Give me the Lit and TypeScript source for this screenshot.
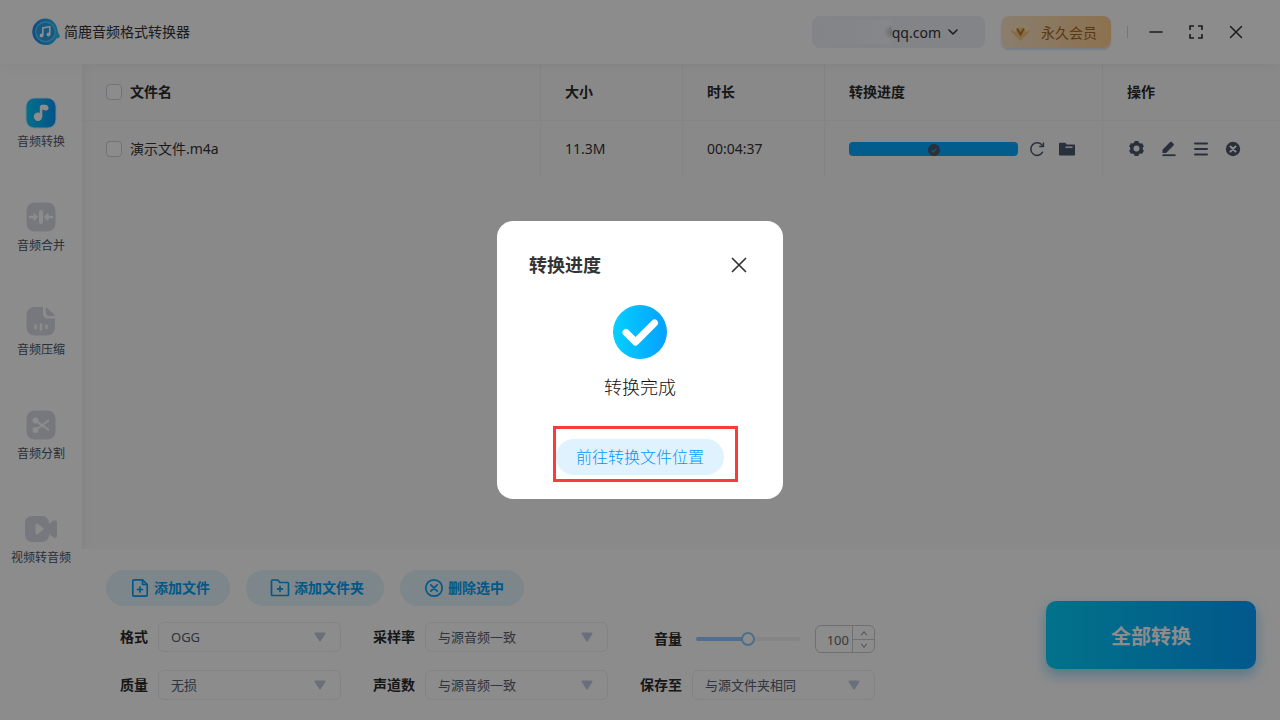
import { LitElement, html, svg, css } from "lit";
import { customElement, property, state } from "lit/decorators.js";
import { classMap } from "lit/directives/class-map.js";

const reset = css`
  * {
    box-sizing: border-box;
  }
  button {
    margin: 0;
    padding: 0;
    border: 0;
    background: none;
    font: inherit;
    color: inherit;
    cursor: pointer;
  }
  svg {
    display: block;
    flex: none;
  }
`;

const stroke = (d: string, width = 2) =>
  svg`<path d=${d} fill="none" stroke="currentColor" stroke-width=${width} stroke-linecap="round" stroke-linejoin="round"/>`;

const icon18 = (body: unknown) =>
  html`<svg width="18" height="18" viewBox="0 0 18 18" aria-hidden="true">${body}</svg>`;

const icons = {
  refresh: icon18(svg`
    <path d="M14.6 12.2A6.3 6.3 0 1 1 14.4 5.6" fill="none" stroke="currentColor" stroke-width="1.5" stroke-linecap="round"/>
    <path d="M15.4 2.6V6.6H11.2" fill="none" stroke="currentColor" stroke-width="1.5"/>`),
  folder: icon18(svg`
    <path d="M2 2.8h5.2l1.6 1.6h7.4c.5 0 .8.3.8.8v9.600c0 .5-.3.8-.8.8H1.800c-.5 0-.8-.3-.8-.8V3.800c0-.6.4-1 1-1z" fill="currentColor"/>
    <path d="M7.500 7.200h7" stroke="#fafafa" stroke-width="1.400"/>`),
  gear: icon18(svg`
    <circle cx="9.500" cy="8.500" r="4.700" fill="none" stroke="currentColor" stroke-width="3.400"/>
    <path d="M9.500 1v3M9.500 13v3M3 4.800l2.600 1.500M13.400 10.700l2.600 1.500M3 12.200l2.600-1.500M13.400 6.300l2.600-1.500" stroke="currentColor" stroke-width="4"/>`),
  edit: icon18(svg`
    <path d="M3.500 9.700l7.600-7.600c.5-.5 1.200-.5 1.700 0l1.700 1.700c.5.5.5 1.200 0 1.700L7 13H3.500z" fill="currentColor"/>
    <path d="M3.500 15.200h13" stroke="currentColor" stroke-width="1.800"/>`),
  list: icon18(stroke("M4 3.500h12M4 9h12M4 14.500h12", 2)),
  remove: icon18(svg`
    <circle cx="10" cy="9" r="7.200" fill="currentColor"/>
    <path d="M7.500 6.500l5 5M12.500 6.500l-5 5" stroke="#fafafa" stroke-width="2" stroke-linecap="round"/>`),
};

const navIcons = {
  convert: html`<svg width="32" height="32" viewBox="0 0 32 32" aria-hidden="true">
    <defs><linearGradient id="nav" x1="0" y1="0" x2="1" y2="0"><stop stop-color="#05cbfb"/><stop offset="1" stop-color="#0a98fa"/></linearGradient></defs>
    <rect x="0.500" y="0.500" width="31" height="31" rx="9" fill="#bfe9ff" opacity=".7"/>
    <rect x="1.500" y="1.500" width="29" height="29" rx="8" fill="url(#nav)"/>
    <circle cx="13" cy="19.800" r="4.200" fill="#fff"/>
    <path d="M14.800 20V10.200c0-1.500 1-2.400 2.400-2.400h3c2 0 3.400 1.300 3.400 3.200 0 1.800-1.500 2.800-3.300 2.400l-3-.6V20z" fill="#fff"/>
  </svg>`,
  merge: html`<svg width="32" height="32" viewBox="0 0 32 32" aria-hidden="true">
    <rect x="1.500" y="1.500" width="29" height="29" rx="8" fill="#d9dbe4"/>
    <path d="M16 11v10" stroke="#fff" stroke-width="4" stroke-linecap="round"/>
    <path d="M5 16h5M27 16h-5" stroke="#fff" stroke-width="2.600" stroke-linecap="round"/>
    <path d="M9 12.500l3.700 3.500L9 19.500zM23 12.500L19.300 16l3.700 3.500z" fill="#fff" stroke="#fff" stroke-linejoin="round"/>
  </svg>`,
  compress: html`<svg width="32" height="32" viewBox="0 0 32 32" aria-hidden="true">
    <path d="M9.500 2H18v5.500c0 4 2 6 6 6h6V22.500a8 8 0 0 1-8 8H9.500a8 8 0 0 1-8-8V10a8 8 0 0 1 8-8z" fill="#d9dbe4"/>
    <path d="M20.800 2.500c.8 0 1.500.4 2 .9l6 5.600c.7.700 1 1.200 1 2H24.500c-2.500 0-3.700-1.200-3.700-3.600z" fill="#d9dbe4"/>
    <path d="M10.500 20.500v2.500M16 19.500v5M21.500 20.500v2.500" stroke="#fff" stroke-width="2.600" stroke-linecap="round"/>
  </svg>`,
  split: html`<svg width="32" height="32" viewBox="0 0 32 32" aria-hidden="true">
    <rect x="1.500" y="1.500" width="29" height="29" rx="8" fill="#d9dbe4"/>
    <circle cx="10.500" cy="11.500" r="3" fill="#fff"/>
    <circle cx="10.500" cy="21" r="3" fill="#fff"/>
    <path d="M12 12.600L23.500 20.700M12 20L23.500 11.500" stroke="#fff" stroke-width="2" stroke-linecap="round"/>
  </svg>`,
  video: html`<svg width="32" height="32" viewBox="0 0 32 32" aria-hidden="true">
    <path d="M24 11l4-3.200c2-1.400 4-.5 4 1.700v13c0 2.200-2 3.100-4 1.700L24 21z" fill="#d9dbe4"/>
    <rect x="0" y="3" width="24" height="26" rx="6.500" fill="#d9dbe4"/>
    <path d="M10.500 12.200v7.600c0 1.400 1 2 2.200 1.300l5.300-4c.9-.6.900-1.600 0-2.200l-5.300-4c-1.200-.7-2.200-.1-2.200 1.300z" fill="#fff"/>
  </svg>`,
};

const actionIcons = {
  file: html`<svg width="20" height="20" viewBox="0 0 20 20" aria-hidden="true">
    ${stroke("M12.500 1.800H4c-.7 0-1.200.5-1.200 1.200v14c0 .7.500 1.200 1.200 1.200h12c.7 0 1.200-.5 1.200-1.200V6.500z", 1.7)}
    ${stroke("M12.500 1.800v4.700h4.700M10 9v5M7.500 11.500h5", 1.7)}
  </svg>`,
  folder: html`<svg width="20" height="20" viewBox="0 0 20 20" aria-hidden="true">
    ${stroke("M2.600 2h5.200l2 2.500h7.600c.6 0 1.100.5 1.100 1.100v10.800c0 .6-.5 1.100-1.100 1.100H2.600c-.6 0-1.100-.5-1.100-1.100V3.100C1.500 2.500 2 2 2.600 2z", 1.7)}
    ${stroke("M10 8.300v5M7.500 10.800h5", 1.7)}
  </svg>`,
  remove: html`<svg width="20" height="20" viewBox="0 0 20 20" aria-hidden="true">
    <circle cx="10" cy="10" r="8.200" fill="none" stroke="currentColor" stroke-width="1.700"/>
    ${stroke("M6.800 6.800l6.400 6.400M13.200 6.800l-6.400 6.400", 1.7)}
  </svg>`,
};

@customElement("title-bar")
class TitleBar extends LitElement {
  static styles = [
    reset,
    css`
      :host {
        display: flex;
        align-items: center;
        gap: 16px;
        height: 64px;
        padding: 0 32px;
        background: #fff;
        box-shadow: 0 0 12px rgba(60, 70, 90, 0.08);
      }
      .brand {
        display: flex;
        align-items: center;
        gap: 4px;
        margin-right: auto;
        font-size: 14px;
        line-height: 20px;
        color: #333;
      }
      .account {
        display: flex;
        align-items: center;
        gap: 6px;
        height: 32px;
        padding: 0 26px 0 12px;
        border-radius: 8px;
        background: #edf0f8;
        color: #333;
        font-size: 14px;
      }
      .mask {
        width: 68px;
        height: 24px;
        background: radial-gradient(8px 8px at 100% 50%, #b4c6d4, transparent),
          linear-gradient(90deg, #eef1f8, #f5f7fa);
        border-radius: 2px;
      }
      .address {
        display: flex;
        align-items: center;
      }
      .vip {
        display: flex;
        align-items: center;
        gap: 10px;
        height: 32px;
        padding: 0 14px 0 9px;
        border-radius: 8px;
        background: linear-gradient(90deg, #fbe5cb, #ffce8f);
        box-shadow: 0 2px 2px #d6e6f0;
        color: #a5691c;
        font-size: 14px;
      }
      .rule {
        width: 1px;
        height: 12px;
        background: #d5d8e0;
      }
      .window {
        color: #333;
      }
    `,
  ];

  render() {
    return html`
      <div class="brand">
        <svg width="28" height="28" viewBox="0 0 28 28" aria-hidden="true">
          <defs><linearGradient id="logo" x1="0" y1="0" x2="1" y2="0"><stop stop-color="#1a8df0"/><stop offset="1" stop-color="#22c7f0"/></linearGradient></defs>
          <path d="M13.500 0.500c6.600 0 11.500 5.300 12.100 11.600.2 2 .8 3.200 2.200 5.400.3 1.600-1.200 2.700-3.500 2.900C22.200 24.700 18.300 27 13.500 27A13.200 13.200 0 0 1 13.500.5z" fill="url(#logo)"/>
          <circle cx="13.500" cy="13.800" r="9.800" fill="#27a2ee" stroke="#6cc8f5" stroke-width="1.300"/>
          <path d="M10.800 17.500V10l7-1.300v7.600" fill="none" stroke="#fff" stroke-width="1.600"/>
          <circle cx="9.500" cy="17.500" r="1.900" fill="#fff"/><circle cx="16.500" cy="16.500" r="1.900" fill="#fff"/>
        </svg>
        <span>简鹿音频格式转换器</span>
      </div>
      <button class="account">
        <span class="address"><span class="mask"></span>qq.com</span>
        <svg width="12" height="12" viewBox="0 0 12 12" aria-hidden="true">${stroke("M2 4l4 4 4-4", 1.6)}</svg>
      </button>
      <button class="vip">
        <svg width="21" height="20" viewBox="0 0 21 20" aria-hidden="true">
          <path d="M5 2h11l4 5.500-1 3L10.500 19 2 10.500l-1-3z" fill="#f5c680"/>
          <path d="M5 2h11l4 5.500-4 2.500L10.500 5 5 10 1 7.500z" fill="#ffe5b4"/>
          <path d="M7 6.500l3.500 6 3.500-6" fill="none" stroke="#b87a35" stroke-width="2"/>
        </svg>
        <span>永久会员</span>
      </button>
      <span class="rule"></span>
      <button class="window" aria-label="最小化">
        <svg width="24" height="24" viewBox="0 0 24 24">${stroke("M6 12h12", 1.6)}</svg>
      </button>
      <button class="window" aria-label="最大化">
        <svg width="24" height="24" viewBox="0 0 24 24">
          <path d="M6 10V6h4M14 6h4v4M18 14v4h-4M10 18H6v-4" fill="none" stroke="currentColor" stroke-width="1.600"/>
        </svg>
      </button>
      <button class="window" aria-label="关闭">
        <svg width="24" height="24" viewBox="0 0 24 24">${stroke("M6.500 6.500l11 11M17.500 6.500l-11 11", 1.5)}</svg>
      </button>
    `;
  }
}

@customElement("side-nav")
class SideNav extends LitElement {
  @state() private current = "convert";

  static styles = [
    reset,
    css`
      :host {
        display: block;
        width: 82px;
        padding-top: 33px;
        background: #fff;
        box-shadow: 0 0 12px rgba(60, 70, 90, 0.08);
      }
      .list {
        display: flex;
        flex-direction: column;
        gap: 51px;
      }
      .item {
        display: flex;
        flex-direction: column;
        align-items: center;
        gap: 5px;
        width: 100%;
        font-size: 12px;
        line-height: 16px;
        color: #4b5668;
      }
      .active {
        color: #515a6b;
      }
    `,
  ];

  private items: [keyof typeof navIcons, string][] = [
    ["convert", "音频转换"],
    ["merge", "音频合并"],
    ["compress", "音频压缩"],
    ["split", "音频分割"],
    ["video", "视频转音频"],
  ];

  render() {
    return html`<nav class="list">
      ${this.items.map(
        ([key, label]) => html`<button
          class=${classMap({ item: true, active: this.current === key })}
          @click=${() => (this.current = key)}
        >
          ${navIcons[key]}<span>${label}</span>
        </button>`
      )}
    </nav>`;
  }
}

@customElement("file-table")
class FileTable extends LitElement {
  @state() private files = [{ name: "演示文件.m4a", size: "11.3M", time: "00:04:37", progress: 100 }];

  static styles = [
    reset,
    css`
      :host {
        display: block;
      }
      .table {
        width: 100%;
        table-layout: fixed;
        border-collapse: separate;
        border-spacing: 0;
        font-size: 14px;
        line-height: 20px;
        color: #333;
      }
      .table th,
      .table td {
        height: 56px;
        padding: 0 24px;
        text-align: left;
        border-left: 1px solid #eef0f5;
      }
      .table th {
        height: 57px;
        border-bottom: 1px solid #eef0f5;
        font-weight: 700;
        color: #2b2b2b;
      }
      .table th:first-child,
      .table td:first-child {
        border-left: 0;
      }
      .short {
        width: 142px;
      }
      .wide {
        width: 278px;
      }
      .last {
        width: 178px;
      }
      .name {
        display: flex;
        align-items: center;
        gap: 8px;
      }
      .check {
        appearance: none;
        width: 16px;
        height: 16px;
        margin: 0;
        border: 1px solid #d0d2da;
        border-radius: 4px;
        background: #fff;
      }
      .progress,
      .tools {
        display: flex;
        align-items: center;
      }
      .progress {
        gap: 10px;
        padding-right: 2px;
      }
      .tools {
        gap: 12px;
        color: #4c586e;
      }
      .ops {
        gap: 14px;
      }
      .track {
        display: grid;
        flex: 1;
        height: 14px;
        border-radius: 4px;
        background: #e6ebf2;
        overflow: hidden;
      }
      .fill,
      .done {
        grid-area: 1 / 1;
      }
      .fill {
        background: #05a8ff;
      }
      .done {
        place-self: end center;
      }
    `,
  ];

  render() {
    return html`<table class="table">
      <thead>
        <tr>
          <th><label class="name"><input class="check" type="checkbox" />文件名</label></th>
          <th class="short">大小</th>
          <th class="short">时长</th>
          <th class="wide">转换进度</th>
          <th class="last">操作</th>
        </tr>
      </thead>
      <tbody>
        ${this.files.map(
          (f) => html`<tr>
            <td><label class="name"><input class="check" type="checkbox" />${f.name}</label></td>
            <td>${f.size}</td>
            <td>${f.time}</td>
            <td>
              <div class="progress">
                <div class="track">
                  <div class="fill" style="width:${f.progress}%"></div>
                  <svg class="done" width="12" height="12" viewBox="0 0 12 12" aria-hidden="true">
                    <circle cx="6" cy="6" r="6" fill="#4c586e"/>
                    <path d="M3.500 6.200l1.800 1.800 3.200-3.700" fill="none" stroke="#19a4f5" stroke-width="1.200"/>
                  </svg>
                </div>
                <div class="tools">
                  <button aria-label="重新转换">${icons.refresh}</button>
                  <button aria-label="打开文件夹">${icons.folder}</button>
                </div>
              </div>
            </td>
            <td>
              <div class="tools ops">
                <button aria-label="设置">${icons.gear}</button>
                <button aria-label="编辑">${icons.edit}</button>
                <button aria-label="详情">${icons.list}</button>
                <button aria-label="移除">${icons.remove}</button>
              </div>
            </td>
          </tr>`
        )}
      </tbody>
    </table>`;
  }
}

@customElement("option-field")
class OptionField extends LitElement {
  @property() label = "";
  @property() value = "";

  static styles = [
    reset,
    css`
      :host {
        display: grid;
        grid-template-columns: 42px minmax(0, 183px);
        align-items: center;
        gap: 10px;
      }
      .label {
        text-align: right;
        font-size: 14px;
        line-height: 20px;
        font-weight: 700;
        color: #2b2b2b;
        white-space: nowrap;
      }
      .box {
        display: grid;
        align-items: center;
      }
      .select {
        grid-area: 1 / 1;
        appearance: none;
        width: 100%;
        height: 30px;
        padding: 0 32px 0 12px;
        border: 1px solid #eceef3;
        border-radius: 6px;
        background: #fff;
        font: inherit;
        font-size: 13px;
        color: #566072;
      }
      .arrow {
        grid-area: 1 / 1;
        justify-self: end;
        margin-right: 15px;
        pointer-events: none;
      }
    `,
  ];

  render() {
    return html`
      <label class="label" for="select">${this.label}</label>
      <div class="box">
        <select class="select" id="select"><option>${this.value}</option></select>
        <svg class="arrow" width="12" height="10" viewBox="0 0 12 10" aria-hidden="true">
          <path d="M1.500 1.500h9L6 8.500z" fill="#c3c8e0" stroke="#c3c8e0" stroke-width="2" stroke-linejoin="round"/>
        </svg>
      </div>
    `;
  }
}

@customElement("volume-field")
class VolumeField extends LitElement {
  @state() private volume = 100;

  static styles = [
    reset,
    css`
      :host {
        display: flex;
        align-items: center;
        padding-top: 3px;
      }
      .label {
        width: 42px;
        text-align: right;
        font-size: 14px;
        line-height: 20px;
        font-weight: 700;
        color: #2b2b2b;
      }
      .range {
        appearance: none;
        flex: 1;
        min-width: 0;
        height: 14px;
        margin: 0 15px 0 14px;
        background: none;
      }
      .range::-webkit-slider-runnable-track {
        height: 4px;
        border-radius: 2px;
        background: linear-gradient(90deg, #90cbff 50%, #f2f3f5 50%);
      }
      .range::-webkit-slider-thumb {
        appearance: none;
        width: 14px;
        height: 14px;
        margin-top: -5px;
        border: 2px solid #90c8fa;
        border-radius: 50%;
        background: #fff;
      }
      .spin {
        display: grid;
        grid-template-columns: 1fr 22px;
        grid-template-rows: 1fr 1fr;
        width: 60px;
        height: 28px;
        border: 1px solid #ccc;
        border-radius: 6px;
        overflow: hidden;
      }
      .number {
        appearance: none;
        grid-row: 1 / 3;
        min-width: 0;
        width: 100%;
        padding: 2px 3px 0 0;
        border: 0;
        background: none;
        font: inherit;
        font-size: 13px;
        color: #666;
        text-align: right;
      }
      .step {
        display: grid;
        place-items: center;
        border-left: 1px solid #ccc;
        color: #888;
      }
      .down {
        border-top: 1px solid #ccc;
      }
    `,
  ];

  private nudge(by: number) {
    this.volume = Math.min(200, Math.max(0, this.volume + by));
  }

  render() {
    return html`
      <label class="label" for="range">音量</label>
      <input
        class="range"
        id="range"
        type="range"
        min="0"
        max="200"
        .value=${String(this.volume)}
        @input=${(e: Event) => (this.volume = Number((e.target as HTMLInputElement).value))}
      />
      <div class="spin">
        <input class="number" aria-label="音量" inputmode="numeric" .value=${String(this.volume)} />
        <button class="step" aria-label="增大" @click=${() => this.nudge(1)}>
          <svg width="8" height="6" viewBox="0 0 8 6">${stroke("M1.500 5L4 1.500 6.500 5", 1)}</svg>
        </button>
        <button class="step down" aria-label="减小" @click=${() => this.nudge(-1)}>
          <svg width="8" height="6" viewBox="0 0 8 6">${stroke("M1.500 1L4 4.500 6.500 1", 1)}</svg>
        </button>
      </div>
    `;
  }
}

@customElement("control-panel")
class ControlPanel extends LitElement {
  static styles = [
    reset,
    css`
      :host {
        display: flex;
        align-items: center;
        justify-content: space-between;
        gap: 24px;
        padding: 21px 24px 20px;
        background: #fff;
      }
      .actions {
        display: flex;
        gap: 16px;
        margin-bottom: 16px;
      }
      .action {
        display: flex;
        align-items: center;
        gap: 4px;
        height: 36px;
        padding: 0 20px 0 24px;
        border-radius: 18px;
        background: #e3f4fb;
        color: #05a0f5;
        font-size: 14px;
        line-height: 20px;
        font-weight: 700;
      }
      .fields {
        display: grid;
        grid-template-columns: repeat(3, minmax(0, 235px));
        align-items: start;
        gap: 17px 32px;
      }
      .start {
        flex: none;
        width: 210px;
        height: 68px;
        border-radius: 10px;
        background: linear-gradient(90deg, #05d0fb, #05a0ff);
        box-shadow: 0 6px 14px rgba(5, 150, 240, 0.4);
        color: #fff;
        font-size: 20px;
        font-weight: 700;
      }
    `,
  ];

  render() {
    return html`
      <div>
        <div class="actions">
          <button class="action">${actionIcons.file}添加文件</button>
          <button class="action">${actionIcons.folder}添加文件夹</button>
          <button class="action">${actionIcons.remove}删除选中</button>
        </div>
        <div class="fields">
          <option-field label="格式" value="OGG"></option-field>
          <option-field label="采样率" value="与源音频一致"></option-field>
          <volume-field></volume-field>
          <option-field label="质量" value="无损"></option-field>
          <option-field label="声道数" value="与源音频一致"></option-field>
          <option-field label="保存至" value="与源文件夹相同"></option-field>
        </div>
      </div>
      <button class="start">全部转换</button>
    `;
  }
}

@customElement("result-dialog")
class ResultDialog extends LitElement {
  static styles = [
    reset,
    css`
      :host {
        position: fixed;
        inset: 0;
        display: grid;
        place-items: center;
        background: rgba(0, 0, 0, 0.45);
      }
      .card {
        display: flex;
        flex-direction: column;
        align-items: center;
        width: 286px;
        padding: 32px 32px 24px;
        border-radius: 16px;
        background: #fff;
        color: #333;
      }
      .head {
        display: flex;
        align-items: center;
        justify-content: space-between;
        width: 100%;
        margin-bottom: 28px;
      }
      .title {
        margin: 0;
        font-size: 18px;
        line-height: 24px;
        font-weight: 700;
      }
      .text {
        margin: 14px 0 38px;
        font-size: 18px;
        line-height: 28px;
        font-weight: 300;
        color: #111;
      }
      .spot {
        position: relative;
      }
      .open {
        height: 36px;
        padding: 0 20px 2px;
        border-radius: 18px;
        background: #e0f2fd;
        color: #0098ff;
        font-size: 16px;
        font-weight: 300;
      }
      .frame {
        position: absolute;
        inset: -13px -14px -7px -3px;
        border: 3px solid #fb3a3a;
        pointer-events: none;
      }
    `,
  ];

  render() {
    return html`
      <section class="card" role="dialog" aria-labelledby="title">
        <header class="head">
          <h2 class="title" id="title">转换进度</h2>
          <button aria-label="关闭">
            <svg width="24" height="24" viewBox="0 0 24 24">${stroke("M5.500 5.500l13 13M18.500 5.500l-13 13", 1.7)}</svg>
          </button>
        </header>
        <svg width="54" height="54" viewBox="0 0 54 54" aria-hidden="true">
          <defs><linearGradient id="ok" x1="0" y1="0" x2="1" y2="0"><stop stop-color="#05d0ff"/><stop offset="1" stop-color="#05a0ff"/></linearGradient></defs>
          <circle cx="27" cy="27" r="27" fill="url(#ok)"/>
          <path d="M13 27.500l9.500 9.500L41.500 18" fill="none" stroke="#fff" stroke-width="7" stroke-linecap="round" stroke-linejoin="round"/>
        </svg>
        <p class="text">转换完成</p>
        <div class="spot">
          <button class="open">前往转换文件位置</button>
          <span class="frame"></span>
        </div>
      </section>
    `;
  }
}

@customElement("app-root")
class AppRoot extends LitElement {
  static styles = css`
    :host {
      display: flex;
      flex-direction: column;
      min-height: 100vh;
      background: #fafafb;
      font-family: "Noto Sans", "Noto Sans CJK SC", sans-serif;
    }
    .bar {
      position: relative;
      z-index: 1;
    }
    .body {
      display: flex;
      flex: 1;
    }
    .nav {
      flex: none;
    }
    .main {
      display: flex;
      flex: 1;
      flex-direction: column;
      min-width: 0;
    }
    .files {
      flex: 1;
    }
    .dialog {
      z-index: 2;
    }
  `;

  render() {
    return html`
      <title-bar class="bar"></title-bar>
      <div class="body">
        <side-nav class="nav"></side-nav>
        <main class="main">
          <file-table class="files"></file-table>
          <control-panel></control-panel>
        </main>
      </div>
      <result-dialog class="dialog"></result-dialog>
    `;
  }
}
